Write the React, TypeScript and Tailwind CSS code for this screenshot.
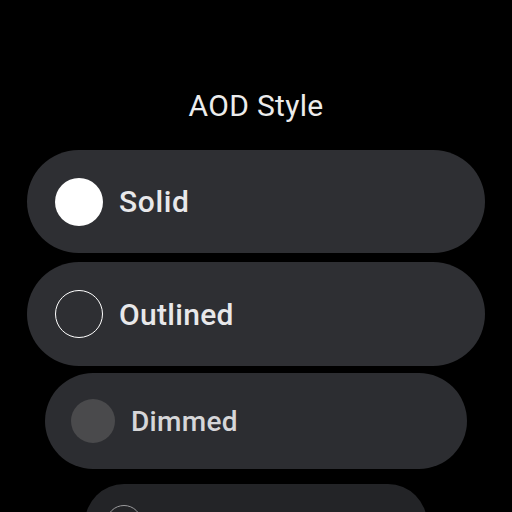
import React from "react";

export default function App() {
  return (
    <div
      className="w-[512px] h-[512px] bg-black overflow-hidden flex flex-col items-center"
      style={{ fontFamily: "Roboto, 'Liberation Sans', sans-serif" }}
    >
      <div className="shrink-0 mt-[88px] h-[36px] text-[30px] leading-[36px] text-[#ececec] tracking-[0.3px]">
        AOD Style
      </div>
      <div className="shrink-0 mt-[26px] w-[458px] h-[103px] rounded-full bg-[#2e2f33] flex items-center pl-[28px]">
        <div className="w-[48px] h-[48px] rounded-full bg-white" />
        <span className="ml-[16px] text-[30px] font-medium text-[#e8e8ea] tracking-[0.6px]">Solid</span>
      </div>
      <div className="shrink-0 mt-[9px] w-[458px] h-[104px] rounded-full bg-[#2e2f33] flex items-center pl-[28px]">
        <div className="w-[48px] h-[48px] rounded-full border-[1.5px] border-white" />
        <span className="ml-[16px] text-[30px] font-medium text-[#e8e8ea] tracking-[0.3px]">Outlined</span>
      </div>
      <div className="shrink-0 mt-[7px] w-[422px] h-[96px] rounded-full bg-[#2c2d31] flex items-center pl-[26px]">
        <div className="w-[44px] h-[44px] rounded-full bg-[#4a4a4c]" />
        <span className="ml-[16px] mt-[2px] text-[28px] font-medium text-[#d6d6d8] tracking-[0.3px]">Dimmed</span>
      </div>
      <div className="shrink-0 mt-[15px] w-[342px] h-[78px] rounded-full bg-[#232427] flex items-center pl-[21px]">
        <div className="w-[36px] h-[36px] rounded-full border-[1.5px] border-[#9a9a9c]" />
        <span className="ml-[14px] text-[24px] font-medium text-[#bcbcbe]">Hidden</span>
      </div>
    </div>
  );
}
